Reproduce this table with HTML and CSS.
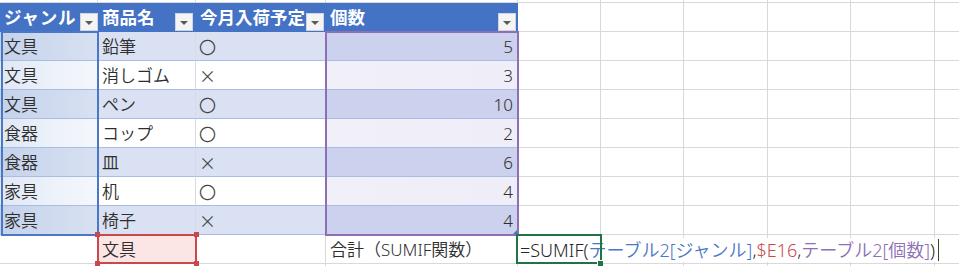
FILE: index.html
```html
<!DOCTYPE html>
<html lang="ja">
<head>
<meta charset="utf-8">
<title>SUMIF</title>
<link rel="stylesheet" href="styles.css">
</head>
<body>
<div class="sheet">
  <div class="cells">
    <div class="c"></div><div class="c"></div><div class="c"></div><div class="c"></div><div class="c"></div><div class="c"></div><div class="c"></div><div class="c"></div><div class="c"></div><div class="c"></div>

    <div class="c th"><span class="tt tt-wide">ジャンル</span><span class="dd dd-a"></span></div>
    <div class="c th"><span class="tt">商品名</span><span class="dd dd-b"></span></div>
    <div class="c th"><span class="tt">今月入荷予定</span><span class="dd dd-c"></span></div>
    <div class="c th"><span class="tt">個数</span><span class="dd dd-d"></span></div>
    <div class="c"></div><div class="c"></div><div class="c"></div><div class="c"></div><div class="c"></div><div class="c"></div>

    <div class="c td ga band">文具</div><div class="c td band">鉛筆</div><div class="c td band mk">〇</div><div class="c td gd band num">5</div>
    <div class="c"></div><div class="c"></div><div class="c"></div><div class="c"></div><div class="c"></div><div class="c"></div>

    <div class="c td ga">文具</div><div class="c td">消しゴム</div><div class="c td mk">×</div><div class="c td gd num">3</div>
    <div class="c"></div><div class="c"></div><div class="c"></div><div class="c"></div><div class="c"></div><div class="c"></div>

    <div class="c td ga band">文具</div><div class="c td band">ペン</div><div class="c td band mk">〇</div><div class="c td gd band num">10</div>
    <div class="c"></div><div class="c"></div><div class="c"></div><div class="c"></div><div class="c"></div><div class="c"></div>

    <div class="c td ga">食器</div><div class="c td">コップ</div><div class="c td mk">〇</div><div class="c td gd num">2</div>
    <div class="c"></div><div class="c"></div><div class="c"></div><div class="c"></div><div class="c"></div><div class="c"></div>

    <div class="c td ga band">食器</div><div class="c td band">皿</div><div class="c td band mk">×</div><div class="c td gd band num">6</div>
    <div class="c"></div><div class="c"></div><div class="c"></div><div class="c"></div><div class="c"></div><div class="c"></div>

    <div class="c td ga">家具</div><div class="c td">机</div><div class="c td mk">〇</div><div class="c td gd num">4</div>
    <div class="c"></div><div class="c"></div><div class="c"></div><div class="c"></div><div class="c"></div><div class="c"></div>

    <div class="c td ga band">家具</div><div class="c td band">椅子</div><div class="c td band mk">×</div><div class="c td gd band num">4</div>
    <div class="c"></div><div class="c"></div><div class="c"></div><div class="c"></div><div class="c"></div><div class="c"></div>

    <div class="c"></div><div class="c txt pink">文具</div><div class="c"></div><div class="c txt">合計（SUMIF関数）</div>
    <div class="c"></div><div class="c"></div><div class="c"></div><div class="c"></div><div class="c"></div><div class="c"></div>

    <div class="c"></div><div class="c"></div><div class="c"></div><div class="c"></div><div class="c"></div><div class="c"></div><div class="c"></div><div class="c"></div><div class="c"></div><div class="c"></div>
  </div>

  <div class="overlay">
    <div class="rng rng-blue"></div>
    <div class="rng rng-purple"><i class="handle"></i></div>
    <div class="rng rng-red"><i class="k k-tl"></i><i class="k k-tr"></i><i class="k k-bl"></i><i class="k k-br"></i></div>
    <div class="rng rng-green"><i class="fill"></i></div>
    <div class="edit"><span class="f-k">=SUMIF(</span><span class="f-b">テーブル2[ジャンル]</span><span class="f-k">,</span><span class="f-r">$E16</span><span class="f-k">,</span><span class="f-p">テーブル2[個数]</span><span class="f-k">)</span><span class="caret"></span></div>
  </div>
</div>
</body>
</html>
```

FILE: styles.css
```css
html, body {
  margin: 0;
  padding: 0;
  background: #ffffff;
  overflow: hidden;
}

body {
  font-family: "Noto Sans", "Noto Sans CJK JP", sans-serif;
  color: #2e2e2e;
}

.sheet {
  display: grid;
  width: 960px;
  height: 266px;
  overflow: hidden;
}

.cells,
.overlay {
  grid-area: 1 / 1;
  display: grid;
  grid-template-columns: 98px 98px 130px 192px 83px 83px 84px 83px 84px 25px;
  grid-template-rows: 3px repeat(10, 29px);
}

.overlay {
  pointer-events: none;
}

.c {
  box-sizing: border-box;
  border-right: 1px solid #d9d9d9;
  border-bottom: 1px solid #d9d9d9;
  display: flex;
  align-items: center;
  white-space: nowrap;
  font-size: 17px;
  font-weight: 350;
  line-height: 1;
  min-width: 0;
}

/* header */
.th {
  background: #4472c4;
  color: #ffffff;
  font-family: "Noto Sans CJK JP", sans-serif;
  font-weight: 700;
  font-size: 17.5px;
  border-right-color: #4472c4;
  border-bottom-color: #4472c4;
  padding-left: 4px;
}

.tt {
  flex: 0 0 auto;
}

.tt-wide {
  letter-spacing: 0.8px;
}

.dd {
  flex: 0 0 auto;
  box-sizing: border-box;
  width: 18px;
  height: 18px;
  margin-left: auto;
  align-self: flex-end;
  background: #f4f4f4;
  border: 1px solid #d0d4dc;
  display: flex;
  align-items: center;
  justify-content: center;
}

.dd::after {
  content: "";
  width: 0;
  height: 0;
  border-left: 4px solid transparent;
  border-right: 4px solid transparent;
  border-top: 4px solid #5a5a5a;
  margin-top: 2px;
}

.dd-a { margin-right: -1px; }
.dd-b { margin-right: 2px; }
.dd-c { margin-right: 1px; }
.dd-d { margin-right: 1px; }

/* body cells */
.td {
  padding-left: 4px;
  background: #ffffff;
  border-bottom-color: #a9bde4;
  border-right-color: #d6dbe6;
}

.td.band {
  background: #d9e1f2;
}

.mk {
  padding-left: 3px;
  font-family: "Noto Sans CJK JP", sans-serif;
  color: #444444;
}

.ga {
  background: linear-gradient(90deg, #e0e8f5 0%, #eef3fa 60%, #f4f7fc 100%);
}

.ga.band {
  background: linear-gradient(90deg, #c4d2eb 0%, #d0dbef 60%, #d8e1f2 100%);
}

.gd {
  background: linear-gradient(90deg, #f1eff8 0%, #efedf7 100%);
}

.gd.band {
  background: linear-gradient(90deg, #ccd2ee 0%, #ccd1ed 100%);
}

.num {
  justify-content: flex-end;
  padding-right: 4px;
}

.txt {
  padding-left: 4px;
}

.pink {
  background: #fbe5e5;
}

/* reference range highlights */
.rng {
  box-sizing: border-box;
  position: relative;
}

.rng-blue {
  grid-column: 1;
  grid-row: 3 / 10;
  margin: -1px -1px -1px 1px;
  border: 2px solid #4a78c6;
}

.rng-purple {
  grid-column: 4;
  grid-row: 3 / 10;
  margin: -1px -1px -1px -1px;
  border: 2px solid #8c6fb4;
}

.handle {
  position: absolute;
  right: 0;
  bottom: 0;
  width: 0;
  height: 0;
  border-left: 4px solid transparent;
  border-bottom: 4px solid #4472c4;
}

.rng-red {
  grid-column: 2;
  grid-row: 10;
  margin: -1px -1px 0 -1px;
  border: 2px solid #c9484b;
}

.k {
  position: absolute;
  width: 5px;
  height: 5px;
  background: #c9484b;
}

.k-tl { left: -4px; top: -4px; }
.k-tr { right: -4px; top: -4px; }
.k-bl { left: -4px; bottom: -4px; }
.k-br { right: -4px; bottom: -4px; }

.rng-green {
  grid-column: 5;
  grid-row: 10;
  margin: -1px -1px 0 -2px;
  border: 2px solid #217346;
}

.fill {
  position: absolute;
  right: -3px;
  bottom: -4px;
  width: 5px;
  height: 5px;
  background: #217346;
  border-left: 1px solid #ffffff;
  border-top: 1px solid #ffffff;
}

.edit {
  grid-column: 5 / 11;
  grid-row: 10;
  justify-self: start;
  align-self: center;
  height: 24px;
  margin-left: 1px;
  padding-left: 1px;
  padding-right: 4px;
  background: #ffffff;
  display: flex;
  align-items: center;
  white-space: nowrap;
  font-size: 18px;
  font-weight: 350;
  line-height: 1;
}

.f-k { color: #262626; }
.f-b { color: #4a78c6; }
.f-r { color: #c9484b; }
.f-p { color: #8c6fb4; }

.caret {
  width: 0;
  height: 22px;
  margin-left: 3px;
  border-left: 1px solid #404040;
}
```
